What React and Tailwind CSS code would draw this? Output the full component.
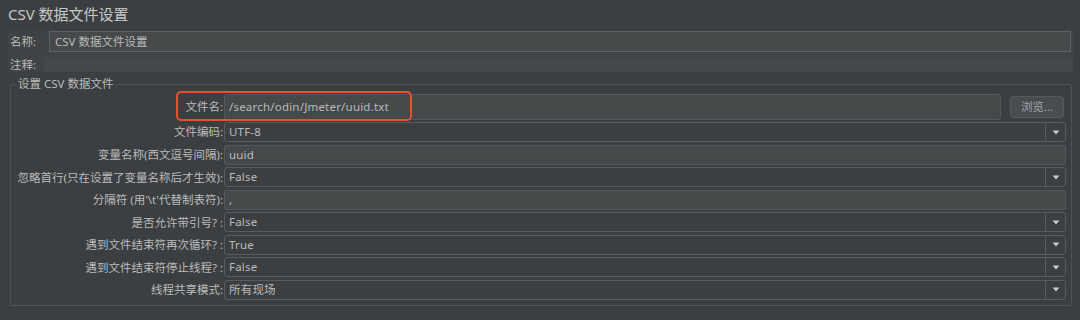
import React from 'react';

const FONT = "font-['Noto_Sans','Noto_Sans_CJK_SC',sans-serif]";

function Arrow() {
  return (
    <svg width="8" height="5" viewBox="0 0 8 5">
      <path d="M0.5 0.5 H7.5 L4 4.5 Z" fill="#c9c9c9" />
    </svg>
  );
}

function Combo({ value }) {
  return (
    <div className="flex h-[20px] flex-1 rounded-[3px] border border-[#595c5e] bg-[#3c3f41]">
      <div className="flex-1 pl-[4px] leading-[18px] tracking-[0.2px] text-[#bbbbbb]">{value}</div>
      <div className="flex w-[20px] items-center justify-center border-l border-[#595c5e]">
        <Arrow />
      </div>
    </div>
  );
}

function Field({ value }) {
  return (
    <div className="h-[20px] flex-1 rounded-[2px] border border-[#55585a] bg-[#45494a] pl-[4px] leading-[18px] tracking-[0.2px] text-[#bbbbbb]">
      {value}
    </div>
  );
}

function Row({ label, children }) {
  return (
    <div className="flex items-center">
      <div className="w-[213px] shrink-0 whitespace-nowrap pr-[1px] text-right text-[#bbbbbb]">{label}</div>
      {children}
    </div>
  );
}

export default function App() {
  return (
    <div className={`h-[320px] w-[1080px] overflow-hidden bg-[#3c3f41] text-[11.5px] ${FONT}`}>
      <div className="h-[30px] pl-[8px] pt-[4px] text-[15px] leading-[20px] text-[#c8c8c8]">CSV 数据文件设置</div>

      <div className="ml-[8px] w-[1065px] bg-[#404345]">
        <div className="flex h-[27px] items-start pt-[1px]">
          <div className="w-[41px] pl-[2px] leading-[21px] text-[#bbbbbb]">名称:</div>
          <div className="mr-[2px] h-[21px] flex-1 border border-[#5f6264] bg-[#45494a] pl-[5px] leading-[19px] text-[#bbbbbb]">
            CSV 数据文件设置
          </div>
        </div>
        <div className="flex h-[15px] items-stretch">
          <div className="w-[36px] pl-[2px] leading-[15px] text-[#bbbbbb]">注释:</div>
          <div className="flex-1 bg-[#45484a]" />
        </div>
      </div>

      <fieldset className="ml-[10px] mt-[5px] w-[1062px] rounded-[2px] border border-[#505355] pb-[5px] pr-[5px]">
        <legend className="ml-[4px] px-[3px] leading-[14px] text-[#bbbbbb]">设置 CSV 数据文件</legend>

        <div className="relative flex h-[29px] items-start pt-[3px]">
          <div className="w-[213px] shrink-0 pr-[1px] text-right leading-[26px] text-[#bbbbbb]">文件名:</div>
          <div className="h-[26px] w-[777px] rounded-[3px] border border-[#55585a] bg-[#45494a] pl-[4px] leading-[24px] tracking-[0.2px] text-[#bbbbbb]">
            /search/odin/Jmeter/uuid.txt
          </div>
          <div className="ml-[9px] mt-[2px] flex h-[22px] w-[54px] items-center justify-center rounded-[3px] border border-[#56595b] bg-[#4a4d50] text-[#a5a5a5]">
            浏览...
          </div>
          <div className="pointer-events-none absolute left-[165px] top-0 h-[30px] w-[236px] rounded-[5px] border-2 border-[#e5532a]" />
        </div>

        <div className="mt-[2px] flex flex-col gap-[2.57px]">
          <Row label="文件编码:"><Combo value="UTF-8" /></Row>
          <Row label="变量名称(西文逗号间隔):"><Field value="uuid" /></Row>
          <Row label="忽略首行(只在设置了变量名称后才生效):"><Combo value="False" /></Row>
          <Row label="分隔符 (用'\t'代替制表符):"><Field value="," /></Row>
          <Row label="是否允许带引号? :"><Combo value="False" /></Row>
          <Row label="遇到文件结束符再次循环? :"><Combo value="True" /></Row>
          <Row label="遇到文件结束符停止线程? :"><Combo value="False" /></Row>
          <Row label="线程共享模式:"><Combo value="所有现场" /></Row>
        </div>
      </fieldset>
    </div>
  );
}
